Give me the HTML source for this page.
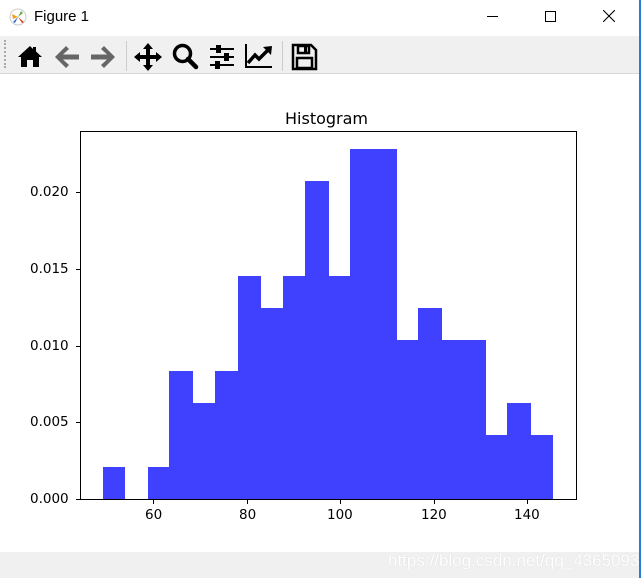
<!DOCTYPE html>
<html><head><meta charset="utf-8"><style>
*{margin:0;padding:0;box-sizing:border-box}
body{width:641px;height:578px;background:#fff;position:relative;overflow:hidden;font-family:"Liberation Sans","DejaVu Sans",sans-serif}
.a{position:absolute}
.tick{position:absolute;font-size:13.5px;color:#000;font-family:"DejaVu Sans","Liberation Sans",sans-serif}
</style></head><body>
<div class="a" style="left:0;top:0;width:641px;height:36px;background:#fff"></div>
<svg class="a" style="left:9px;top:8px" width="18" height="18" viewBox="0 0 18 18">
<circle cx="9" cy="9" r="8" fill="#fff" stroke="#ccc"/>
<path d="M9 9 L3 6 L4 11Z" fill="#f0a020"/><path d="M9 9 L12 3 L14 5Z" fill="#60b040"/><path d="M9 9 L15 14 L13 15Z" fill="#e04020"/><path d="M9 9 L6 15 L4 14Z" fill="#3070d0"/></svg>
<div class="a" style="left:34px;top:8px;font-size:15px;font-family:'Liberation Sans','DejaVu Sans',sans-serif">Figure 1</div>
<div class="a" style="left:487px;top:16px;width:11px;height:1px;background:#000"></div>
<div class="a" style="left:545px;top:11px;width:11px;height:11px;border:1px solid #000"></div>
<svg class="a" style="left:603px;top:10px" width="12" height="12"><path d="M0 0L12 12M12 0L0 12" stroke="#000" stroke-width="1.1"/></svg>
<div class="a" style="left:0;top:36px;width:641px;height:38px;background:#f0f0f0;border-bottom:1px solid #d8d8d8"></div>
<div class="a" style="left:4px;top:40px;width:2px;height:28px;border-left:2px dotted #aaa"></div>
<svg class="a" style="left:16px;top:42px" width="28" height="28" viewBox="0 0 28 28"><path d="M14 4 L2 15 L5 15 L5 25 L11 25 L11 18 L17 18 L17 25 L23 25 L23 15 L26 15 L20 9.5 L20 5 L17 5 L17 7Z" fill="#000"/></svg>
<svg class="a" style="left:53px;top:43px" width="28" height="28" viewBox="0 0 28 28"><path d="M13 3 L2 14 L13 25 L16 22 L10 16.5 L26 16.5 L26 11.5 L10 11.5 L16 6Z" fill="#666"/></svg>
<svg class="a" style="left:89px;top:43px" width="28" height="28" viewBox="0 0 28 28"><path d="M15 3 L26 14 L15 25 L12 22 L18 16.5 L2 16.5 L2 11.5 L18 11.5 L12 6Z" fill="#666"/></svg>
<div class="a" style="left:126px;top:41px;width:1px;height:30px;background:#ccc"></div>
<svg class="a" style="left:133px;top:42px" width="30" height="30" viewBox="0 0 30 30"><path d="M15 1 L20 7 L17 7 L17 13 L23 13 L23 10 L29 15 L23 20 L23 17 L17 17 L17 23 L20 23 L15 29 L10 23 L13 23 L13 17 L7 17 L7 20 L1 15 L7 10 L7 13 L13 13 L13 7 L10 7Z" fill="#000"/></svg>
<svg class="a" style="left:171px;top:42px" width="28" height="28" viewBox="0 0 28 28"><circle cx="11.5" cy="11.5" r="8" fill="none" stroke="#000" stroke-width="3.5"/><path d="M17 17 L25 25" stroke="#000" stroke-width="4.5" stroke-linecap="round"/></svg>
<svg class="a" style="left:208px;top:43px" width="28" height="28" viewBox="0 0 28 28"><g fill="#000"><rect x="2" y="5" width="24" height="2"/><rect x="2" y="13" width="24" height="2"/><rect x="2" y="21" width="24" height="2"/><rect x="8" y="2" width="5" height="8"/><rect x="16" y="10" width="5" height="8"/><rect x="7" y="18" width="5" height="8"/></g></svg>
<svg class="a" style="left:244px;top:42px" width="30" height="28" viewBox="0 0 30 28"><path d="M2 2 L2 25 L28 25" fill="none" stroke="#000" stroke-width="2"/><path d="M4 21 L11 13 L15 17 L24 8" fill="none" stroke="#000" stroke-width="3.5"/><path d="M19 5 L28 4 L27 13Z" fill="#000"/></svg>
<div class="a" style="left:282px;top:41px;width:1px;height:30px;background:#ccc"></div>
<svg class="a" style="left:290px;top:43px" width="28" height="28" viewBox="0 0 28 28"><path d="M3 2 L21 2 L26 7 L26 26 L3 26Z" fill="none" stroke="#000" stroke-width="2.5"/><rect x="8" y="3" width="11" height="7" fill="none" stroke="#000" stroke-width="2.5"/><rect x="14" y="4" width="3" height="5" fill="#000"/><rect x="7" y="15" width="15" height="10" fill="none" stroke="#000" stroke-width="2.5"/></svg>
<div class="tick" style="left:285px;top:109px;font-size:16px">Histogram</div>
<svg class="a" style="left:0;top:0" width="641" height="578">
<g fill="#4040ff" shape-rendering="crispEdges">
<rect x="103" y="467" width="22" height="32"/>
<rect x="148" y="467" width="22" height="32"/>
<rect x="169" y="371" width="24" height="128"/>
<rect x="192" y="403" width="24" height="96"/>
<rect x="215" y="371" width="24" height="128"/>
<rect x="238" y="276" width="23" height="223"/>
<rect x="260" y="308" width="24" height="191"/>
<rect x="283" y="276" width="23" height="223"/>
<rect x="305" y="181" width="24" height="318"/>
<rect x="328" y="276" width="23" height="223"/>
<rect x="350" y="149" width="47" height="350"/>
<rect x="396" y="340" width="23" height="159"/>
<rect x="418" y="308" width="24" height="191"/>
<rect x="441" y="340" width="45" height="159"/>
<rect x="485" y="435" width="23" height="64"/>
<rect x="507" y="403" width="24" height="96"/>
<rect x="530" y="435" width="23" height="64"/>
</g>
<rect x="80.5" y="131.5" width="496" height="368" fill="none" stroke="#000" stroke-width="1"/>
<g stroke="#000" stroke-width="1">
<path d="M80 499.5h-4M80 422.5h-4M80 346.5h-4M80 269.5h-4M80 192.5h-4"/>
<path d="M153.5 500v4M247.5 500v4M340.5 500v4M434.5 500v4M527.5 500v4"/>
</g>
</svg>
<div class="tick" style="left:30px;top:491px">0.000</div>
<div class="tick" style="left:30px;top:414px">0.005</div>
<div class="tick" style="left:30px;top:338px">0.010</div>
<div class="tick" style="left:30px;top:261px">0.015</div>
<div class="tick" style="left:30px;top:184px">0.020</div>
<div class="tick" style="left:145px;top:507px">60</div>
<div class="tick" style="left:239px;top:507px">80</div>
<div class="tick" style="left:327px;top:507px">100</div>
<div class="tick" style="left:421px;top:507px">120</div>
<div class="tick" style="left:514px;top:507px">140</div>
<div class="a" style="left:0;top:552px;width:641px;height:26px;background:#f0f0f0"></div>
<div class="a" style="left:388px;top:551px;font-size:17px;color:#fff;text-shadow:0 0 1px #ccc">https://blog.csdn.net/qq_43650934</div>
<div class="a" style="left:639px;top:0;width:2px;height:578px;background:#2b79d8"></div>
</body></html>
